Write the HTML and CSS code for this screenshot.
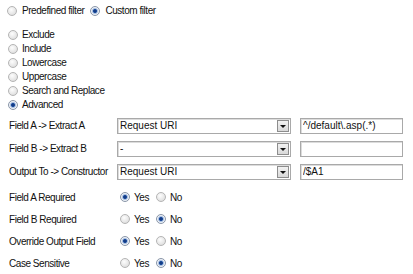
FILE: index.html
```html
<!DOCTYPE html>
<html lang="en">
<head>
  <meta charset="UTF-8" />
  <title>Custom Filter</title>
  <link rel="stylesheet" href="styles.css">
</head>
<body>
  <div class="filter-form">
    <!-- Filter type -->
    <div class="filter-type">
      <label><input type="radio" name="type" /> Predefined filter</label>
      <label><input type="radio" name="type" checked /> Custom filter</label>
    </div>
    <!-- Custom filter kind -->
    <div class="filter-kind">
      <label><input type="radio" name="kind" /> Exclude</label>
      <label><input type="radio" name="kind" /> Include</label>
      <label><input type="radio" name="kind" /> Lowercase</label>
      <label><input type="radio" name="kind" /> Uppercase</label>
      <label><input type="radio" name="kind" /> Search and Replace</label>
      <label><input type="radio" name="kind" checked /> Advanced</label>
    </div>
    <!-- Advanced fields -->
    <div class="fields">
      <div class="row">
        <span class="label">Field A -&gt; Extract A</span>
        <div class="select"><select><option>Request URI</option></select><span class="arrow"></span></div>
        <input type="text" class="text" value="^/default\.asp(.*)" />
      </div>
      <div class="row">
        <span class="label">Field B -&gt; Extract B</span>
        <div class="select"><select><option>-</option></select><span class="arrow"></span></div>
        <input type="text" class="text" value="" />
      </div>
      <div class="row">
        <span class="label">Output To -&gt; Constructor</span>
        <div class="select"><select><option>Request URI</option></select><span class="arrow"></span></div>
        <input type="text" class="text" value="/$A1" />
      </div>
      <div class="row choice first">
        <span class="label">Field A Required</span>
        <label><input type="radio" name="reqa" checked /> Yes</label>
        <label><input type="radio" name="reqa" /> No</label>
      </div>
      <div class="row choice">
        <span class="label">Field B Required</span>
        <label><input type="radio" name="reqb" /> Yes</label>
        <label><input type="radio" name="reqb" checked /> No</label>
      </div>
      <div class="row choice">
        <span class="label">Override Output Field</span>
        <label><input type="radio" name="override" checked /> Yes</label>
        <label><input type="radio" name="override" /> No</label>
      </div>
      <div class="row choice">
        <span class="label">Case Sensitive</span>
        <label><input type="radio" name="case" /> Yes</label>
        <label><input type="radio" name="case" checked /> No</label>
      </div>
    </div>
  </div>
</body>
</html>
```
FILE: styles.css
```css
/* Global */
body {
  margin: 0;
  background: #fff;
  color: #111;
  font-family: "Liberation Sans", Arial, sans-serif;
  font-size: 10px;
  letter-spacing: -0.45px;
}
label {
  display: inline-flex;
  align-items: center;
  gap: 4px;
}
/* Radio buttons, old Windows look */
input[type="radio"] {
  appearance: none;
  -webkit-appearance: none;
  width: 10px;
  height: 10px;
  margin: 0;
  border: 1px solid #b4b4b4;
  border-radius: 50%;
  background: radial-gradient(circle at 40% 35%, #fdfdfd 0, #e6e6e6 60%, #d4d4d4 100%);
  box-sizing: border-box;
}
input[type="radio"]:checked {
  border-color: #8a96a8;
  background: radial-gradient(circle, #0f2e6e 0, #1d4c9c 28%, #9fb8dc 42%, #eef2f8 62%, #d8dde5 100%);
}
/* Filter type */
.filter-type {
  display: flex;
  gap: 6px;
  padding: 4px 0 0 7px;
  line-height: 14px;
}
.filter-type label {
  gap: 5px;
}
/* Filter kind */
.filter-kind {
  display: flex;
  flex-direction: column;
  align-items: flex-start;
  padding: 10px 0 0 8px;
  line-height: 14px;
}
/* Fields */
.fields {
  padding: 2px 0 0 9px;
}
.row {
  display: flex;
  align-items: center;
  height: 23px;
}
.row .label {
  width: 108px;
}
.row.choice {
  height: 22px;
}
.row.choice.first {
  margin-top: 3px;
}
.row.choice label:first-of-type {
  margin-left: 3px;
  margin-right: 7px;
}
.select {
  display: flex;
  align-items: center;
  width: 174px;
  height: 16px;
  box-sizing: border-box;
  border: 1px solid #a9a9a9;
  box-shadow: inset 1px 1px 0 #dcdcdc;
  background: #fff;
}
.select select {
  appearance: none;
  -webkit-appearance: none;
  flex: 1;
  border: none;
  background: transparent;
  font: inherit;
  color: #111;
  padding: 0 2px;
  height: 14px;
  outline: none;
}
.arrow {
  position: relative;
  width: 12px;
  height: 12px;
  margin-right: 1px;
  box-sizing: border-box;
  border: 1px solid #8d8d8d;
  background: linear-gradient(#f2f2f2, #d9d9d9);
}
.arrow::after {
  content: "";
  position: absolute;
  left: 2px;
  top: 4px;
  border-left: 3px solid transparent;
  border-right: 3px solid transparent;
  border-top: 3px solid #111;
}
.text {
  width: 103px;
  height: 16px;
  margin-left: 9px;
  box-sizing: border-box;
  border: 1px solid #a9a9a9;
  box-shadow: inset 1px 1px 0 #dcdcdc;
  padding: 0 2px;
  font: inherit;
  color: #111;
  outline: none;
}
```
